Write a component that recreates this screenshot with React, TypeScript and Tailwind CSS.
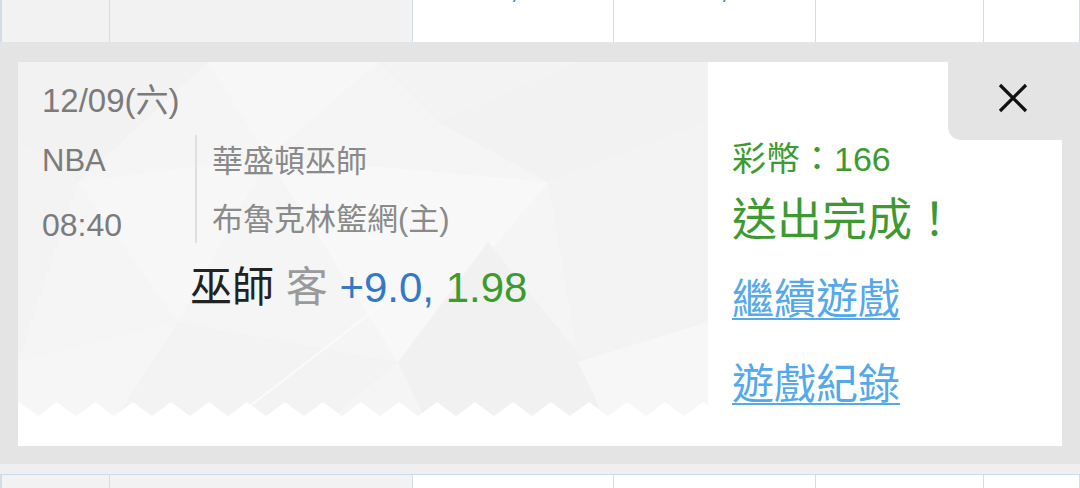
import React from "react";

const cols = [
  { w: "w-[108px]", bg: "bg-[#f2f2f2]" },
  { w: "w-[303px]", bg: "bg-[#f2f2f2]" },
  { w: "w-[201px]", bg: "bg-white" },
  { w: "w-[202px]", bg: "bg-white" },
  { w: "w-[168px]", bg: "bg-white" },
  { w: "flex-1", bg: "bg-white" },
];

function TableRow({ h, top }: { h: string; top?: boolean }) {
  return (
    <div className={`flex ${h} border-l-2 border-[#d3dde8] overflow-hidden`}>
      {cols.map((c, i) => (
        <div
          key={i}
          className={`${c.w} ${c.bg} relative border-r border-[#d3dde8] overflow-hidden`}
        >
          {top && (i === 2 || i === 3) && (
            <span
              className={`absolute top-[-27px] ${i === 2 ? "left-[97px]" : "left-[106px]"} text-[30px] leading-[30px] text-[#3a7fd0]`}
            >
              ,
            </span>
          )}
        </div>
      ))}
    </div>
  );
}

function TicketBg() {
  return (
    <svg
      className="absolute inset-0"
      width="690"
      height="384"
      viewBox="0 0 690 384"
      preserveAspectRatio="none"
    >
      <rect width="690" height="384" fill="#f5f5f5" />
      <polygon points="0,0 190,0 60,120 0,80" fill="#f2f2f2" />
      <polygon points="190,0 360,0 250,95" fill="#f7f7f7" />
      <polygon points="360,0 560,0 420,60" fill="#f3f3f3" />
      <polygon points="420,60 560,0 690,0 690,60 530,120" fill="#f2f2f2" />
      <polygon points="60,120 250,95 160,260" fill="#f7f7f7" />
      <polygon points="0,80 60,120 0,300" fill="#f3f3f3" />
      <polygon points="250,95 530,120 380,300" fill="#f8f8f8" />
      <polygon points="530,120 690,60 690,260 560,300" fill="#f3f3f3" />
      <polygon points="380,300 470,180 600,340 420,384" fill="#f1f1f1" />
      <polygon points="160,260 380,300 280,384 80,384" fill="#f3f3f3" />
      <polygon points="0,300 160,260 80,384 0,384" fill="#f6f6f6" />
      <polygon points="560,300 690,260 690,384 600,384" fill="#f7f7f7" />
      <line x1="180" y1="384" x2="380" y2="230" stroke="#fafafa" strokeWidth="2" />
    </svg>
  );
}

function Zigzag() {
  const pts: string[] = ["0,16"];
  for (let k = -1; k < 20; k++) {
    const peak = 1 + 38 * k;
    pts.push(`${peak},2`);
    pts.push(`${peak + 19},16`);
  }
  pts.push("690,16");
  pts.push("690,40");
  pts.push("0,40");
  return (
    <svg
      className="absolute left-0 bottom-[26px]"
      width="690"
      height="18"
      viewBox="0 0 690 18"
    >
      <polygon
        points={pts.join(" ")}
        fill="#ffffff"
        stroke="#ffffff"
        strokeWidth="3"
        strokeLinejoin="round"
      />
    </svg>
  );
}

export default function App() {
  return (
    <div className="w-[1080px] h-[488px] overflow-hidden flex flex-col bg-[#e4e4e4] font-[family-name:'Liberation_Sans','Noto_Sans_CJK_TC',sans-serif]">
      <TableRow h="h-[42px]" top />
      <div className="h-[422px] px-[18px] pt-[20px] pb-[18px]">
        <div className="flex h-[384px]">
          {/* ticket */}
          <div className="relative w-[690px] h-full bg-white overflow-hidden">
            <div className="absolute left-0 top-0 w-[690px] h-[358px] overflow-hidden">
              <TicketBg />
            </div>
            <Zigzag />
            <div className="relative pl-[24px] pt-[21px]">
              <div className="text-[33px] leading-[36px] text-[#7b7b7b]">
                12/09(六)
              </div>
              <div className="flex mt-[16px] h-[108px]">
                <div className="w-[153px] flex flex-col pt-[8px] gap-[28px] text-[31px] leading-[36px] text-[#7b7b7b]">
                  <div>NBA</div>
                  <div className="text-[32px]">08:40</div>
                </div>
                <div className="w-[2px] h-full bg-[#e0e0e0]" />
                <div className="flex flex-col pl-[15px] pt-[9px] gap-[22px] text-[31px] leading-[36px] text-[#8a8a8a]">
                  <div>華盛頓巫師</div>
                  <div>布魯克林籃網(主)</div>
                </div>
              </div>
              <div className="mt-[22px] ml-[148px] text-[42px] leading-[46px] whitespace-nowrap">
                <span className="text-[#222222]">巫師</span>{" "}
                <span className="text-[#9a9a9a]">客</span>{" "}
                <span className="text-[#3478c6]">+9.0,</span>{" "}
                <span className="text-[#3b9b2e]">1.98</span>
              </div>
            </div>
          </div>
          {/* right panel */}
          <div className="relative flex-1 h-full bg-white">
            <div className="absolute top-0 right-0 w-[114px] h-[78px] bg-[#e4e4e4] rounded-bl-[13px] flex items-center justify-center">
              <svg width="30" height="30" viewBox="0 0 30 30" className="mt-[-6px] ml-[16px]">
                <path
                  d="M2 2 L28 28 M28 2 L2 28"
                  stroke="#111111"
                  strokeWidth="3.2"
                  strokeLinecap="butt"
                />
              </svg>
            </div>
            <div className="flex flex-col pl-[24px] pt-[77px]">
              <div className="text-[34px] leading-[40px] text-[#3d9a31]">
                彩幣：166
              </div>
              <div className="mt-[16px] text-[45px] leading-[52px] text-[#3d9a31]">
                送出完成！
              </div>
              <div className="mt-[29px] text-[42px] leading-[48px] text-[#55a8ea] underline decoration-2 underline-offset-[4px]">
                繼續遊戲
              </div>
              <div className="mt-[37px] text-[42px] leading-[48px] text-[#55a8ea] underline decoration-2 underline-offset-[4px]">
                遊戲紀錄
              </div>
            </div>
          </div>
        </div>
      </div>
      <div className="h-[11px] bg-[#efefef] border-b border-[#c9dbec]" />
      <TableRow h="h-[13px]" />
    </div>
  );
}
